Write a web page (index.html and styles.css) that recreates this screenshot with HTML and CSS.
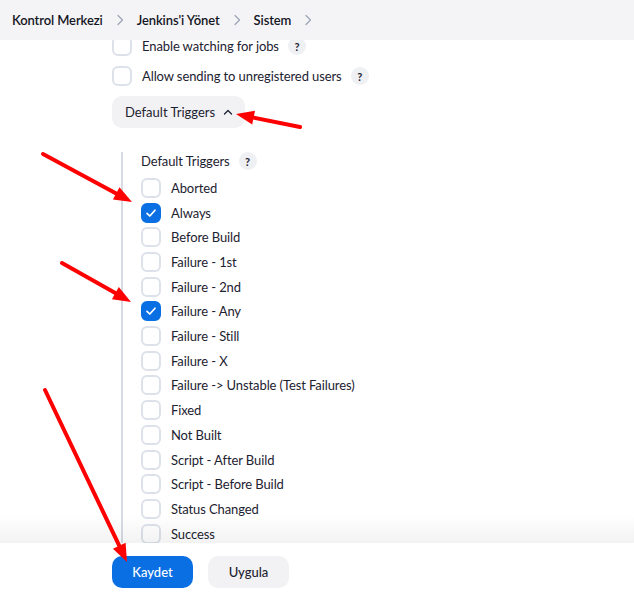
FILE: index.html
```html
<!DOCTYPE html>
<html lang="tr">
<head>
<meta charset="utf-8">
<title>Sistem</title>
<link rel="stylesheet" href="styles.css">
</head>
<body>
<header class="topbar">
  <nav class="crumbs">
    <span class="crumb">Kontrol Merkezi</span>
    <svg class="sep" viewBox="0 0 8 12" width="8" height="12"><path d="M2 1.5 L6.5 6 L2 10.5" fill="none" stroke="currentColor" stroke-width="1.2" stroke-linecap="round" stroke-linejoin="round"/></svg>
    <span class="crumb">Jenkins'i Yönet</span>
    <svg class="sep" viewBox="0 0 8 12" width="8" height="12"><path d="M2 1.5 L6.5 6 L2 10.5" fill="none" stroke="currentColor" stroke-width="1.2" stroke-linecap="round" stroke-linejoin="round"/></svg>
    <span class="crumb">Sistem</span>
    <svg class="sep" viewBox="0 0 8 12" width="8" height="12"><path d="M2 1.5 L6.5 6 L2 10.5" fill="none" stroke="currentColor" stroke-width="1.2" stroke-linecap="round" stroke-linejoin="round"/></svg>
  </nav>
</header>

<main class="content">
  <label class="opt">
    <span class="box"></span>
    <span class="txt">Enable watching for jobs</span>
    <span class="help">?</span>
  </label>
  <label class="opt">
    <span class="box"></span>
    <span class="txt">Allow sending to unregistered users</span>
    <span class="help">?</span>
  </label>

  <button class="toggle" type="button">
    <span>Default Triggers</span>
    <svg class="chev" viewBox="0 0 10 6" width="10" height="6"><path d="M1.5 5 L5 1.5 L8.5 5" fill="none" stroke="currentColor" stroke-width="1.3" stroke-linecap="round" stroke-linejoin="round"/></svg>
  </button>

  <section class="group">
    <div class="group-title"><span>Default Triggers</span><span class="help">?</span></div>
    <ul class="list">
      <li class="item"><span class="box"></span><span>Aborted</span></li>
      <li class="item"><span class="box on"><svg viewBox="0 0 20 20" width="20" height="20"><path d="M6 10.3 L8.8 13 L14 7.2" fill="none" stroke="#fff" stroke-width="1.7" stroke-linecap="round" stroke-linejoin="round"/></svg></span><span>Always</span></li>
      <li class="item"><span class="box"></span><span>Before Build</span></li>
      <li class="item"><span class="box"></span><span>Failure - 1st</span></li>
      <li class="item"><span class="box"></span><span>Failure - 2nd</span></li>
      <li class="item"><span class="box on"><svg viewBox="0 0 20 20" width="20" height="20"><path d="M6 10.3 L8.8 13 L14 7.2" fill="none" stroke="#fff" stroke-width="1.7" stroke-linecap="round" stroke-linejoin="round"/></svg></span><span>Failure - Any</span></li>
      <li class="item"><span class="box"></span><span>Failure - Still</span></li>
      <li class="item"><span class="box"></span><span>Failure - X</span></li>
      <li class="item"><span class="box"></span><span>Failure -&gt; Unstable (Test Failures)</span></li>
      <li class="item"><span class="box"></span><span>Fixed</span></li>
      <li class="item"><span class="box"></span><span>Not Built</span></li>
      <li class="item"><span class="box"></span><span>Script - After Build</span></li>
      <li class="item"><span class="box"></span><span>Script - Before Build</span></li>
      <li class="item"><span class="box"></span><span>Status Changed</span></li>
      <li class="item"><span class="box"></span><span>Success</span></li>
      <li class="item"><span class="box"></span><span>Unstable</span></li>
    </ul>
  </section>
</main>

<footer class="bottombar">
  <button class="btn primary" type="button">Kaydet</button>
  <button class="btn secondary" type="button">Uygula</button>
</footer>

<svg class="arrows" viewBox="0 0 634 598" width="634" height="598">
  <g stroke="#ff0000" stroke-width="4" stroke-linecap="round" fill="#ff0000">
    <line x1="300" y1="127" x2="253.6" y2="117.6"/>
    <polygon stroke="none" points="236,114 255.0,110.7 252.2,124.4"/>
    <line x1="43" y1="154" x2="116.2" y2="193.4"/>
    <polygon stroke="none" points="132,202 112.9,199.6 119.5,187.3"/>
    <line x1="62" y1="263" x2="115.3" y2="293.1"/>
    <polygon stroke="none" points="131,302 111.9,299.2 118.8,287.0"/>
    <line x1="45" y1="390" x2="119.2" y2="545.7"/>
    <polygon stroke="none" points="127,562 112.9,548.8 125.6,542.7"/>
  </g>
</svg>
</body>
</html>
```

FILE: styles.css
```css
html, body {
  margin: 0;
  padding: 0;
  background: #ffffff;
}

body {
  font-family: Lato, "Noto Sans", "Liberation Sans", sans-serif;
  font-size: 13px;
  letter-spacing: -0.1px;
  color: #1d2230;
  width: 634px;
  height: 598px;
  overflow: hidden;
  position: relative;
}

.topbar {
  position: absolute;
  top: 0;
  left: 0;
  right: 0;
  height: 40px;
  background: #f4f4f7;
  z-index: 5;
  display: flex;
  align-items: center;
  padding-left: 12px;
}

.crumbs {
  display: flex;
  align-items: center;
  gap: 12px;
}

.crumb {
  font-weight: 600;
  color: #14161f;
}

.sep {
  color: #9ca3b5;
  margin: 0 1px;
}

.content {
  padding: 36px 0 0 112px;
}

.opt {
  display: flex;
  align-items: center;
  height: 20px;
  margin-bottom: 10px;
}

.box {
  box-sizing: border-box;
  width: 20px;
  height: 20px;
  border: 2px solid #dde1ea;
  border-radius: 6px;
  background: #fff;
  flex: none;
  display: flex;
  align-items: center;
  justify-content: center;
}

.box.on {
  background: #0b6fe4;
  border-color: #0b6fe4;
}

.box.on svg {
  flex: none;
}

.opt .txt {
  margin-left: 10px;
}

.help {
  box-sizing: border-box;
  width: 18px;
  height: 18px;
  border-radius: 50%;
  background: #eef0f4;
  color: #1d2230;
  font-size: 11px;
  font-weight: 700;
  display: inline-flex;
  align-items: center;
  justify-content: center;
  margin-left: 9px;
}

.toggle {
  height: 32px;
  padding: 0 12px 0 13px;
  border: none;
  border-radius: 10px;
  background: #f2f2f5;
  font: inherit;
  color: #1d2230;
  display: flex;
  align-items: center;
  gap: 8px;
  white-space: nowrap;
}

.chev {
  color: #1d2230;
}

.group {
  margin: 24px 0 0 9px;
  border-left: 2px solid #d6dbe4;
  padding-left: 18px;
}

.group-title {
  display: flex;
  align-items: center;
  height: 18px;
  margin-bottom: 5.6px;
}

.list {
  list-style: none;
  margin: 0;
  padding: 0;
}

.item {
  display: flex;
  align-items: center;
  gap: 10px;
  height: 24.7px;
  white-space: nowrap;
}

.bottombar {
  position: absolute;
  left: 0;
  right: 0;
  bottom: 0;
  height: 55px;
  background: #fff;
  z-index: 4;
  display: flex;
  align-items: flex-start;
  gap: 15px;
  padding: 13px 0 0 112px;
  box-sizing: border-box;
}

.bottombar::before {
  content: "";
  position: absolute;
  left: 0;
  right: 0;
  top: -28px;
  height: 28px;
  background: linear-gradient(to bottom, rgba(0, 0, 0, 0), rgba(0, 0, 0, 0.05));
}

.btn {
  height: 32px;
  width: 81px;
  border: none;
  border-radius: 10px;
  font: inherit;
  font-weight: 500;
  padding: 0;
}

.primary {
  background: #0b6fe4;
  color: #fff;
}

.secondary {
  background: #f2f2f5;
  color: #1d2230;
}

.arrows {
  position: absolute;
  top: 0;
  left: 0;
  z-index: 10;
  pointer-events: none;
}
```
